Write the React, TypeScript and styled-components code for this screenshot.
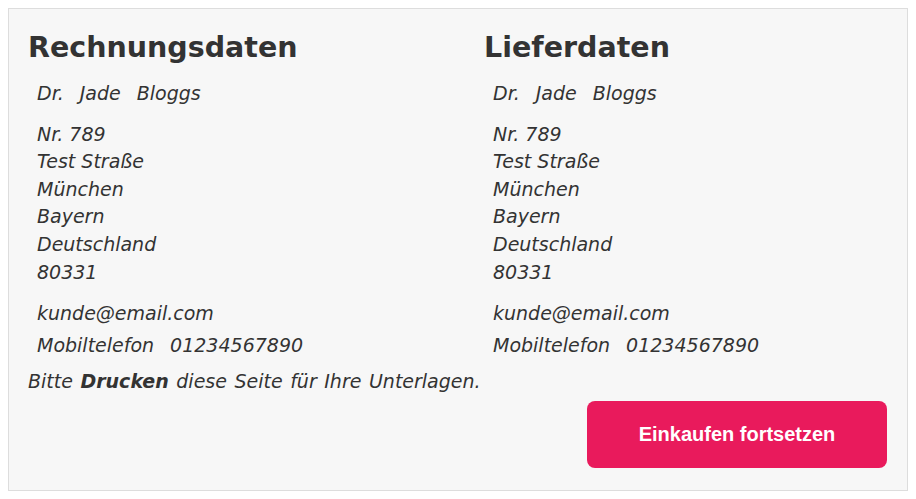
import React from 'react'
import styled, { createGlobalStyle } from 'styled-components'

const GlobalStyle = createGlobalStyle`
  body {
    margin: 8px;
    background: #ffffff;
    font-family: 'DejaVu Sans', Verdana, sans-serif;
    color: #333333;
  }
`

const Panel = styled.div`
  border: 1px solid #dddddd;
  background: #f7f7f7;
  padding: 21px 20px 20px 19px;
  height: 440px;
`

const Columns = styled.div`
  display: grid;
  grid-template-columns: 456px 1fr;
`

const Heading = styled.h2`
  margin: 0;
  font-size: 28.5px;
  line-height: 36px;
  font-weight: bold;
  color: #333333;
`

const Address = styled.address`
  font-style: italic;
  font-size: 19px;
  padding-left: 9px;
  color: #333333;
`

const Line = styled.div<{ $top?: number }>`
  line-height: 27.6px;
  margin-top: ${(p) => p.$top ?? 0}px;
  white-space: pre;
`

const Part = styled.span`
  margin-right: 16px;
`

const Note = styled.p`
  margin: 8px 0 0;
  font-size: 19px;
  line-height: 28px;
  font-style: italic;
  word-spacing: 1.5px;

  b {
    font-weight: bold;
  }
`

const Actions = styled.div`
  display: flex;
  justify-content: flex-end;
  margin-top: 6px;
`

const Button = styled.button`
  width: 300px;
  height: 67px;
  border: none;
  border-radius: 8px;
  background: #e91a5c;
  color: #ffffff;
  font-family: 'Liberation Sans', Arial, sans-serif;
  font-weight: bold;
  font-size: 20px;
  cursor: pointer;
`

type Person = {
  title: string
  first: string
  last: string
  lines: string[]
  email: string
  phone: string
}

const person: Person = {
  title: 'Dr.',
  first: 'Jade',
  last: 'Bloggs',
  lines: ['Nr. 789', 'Test Straße', 'München', 'Bayern', 'Deutschland', '80331'],
  email: 'kunde@email.com',
  phone: '01234567890'
}

function AddressBlock({ heading, p }: { heading: string; p: Person }) {
  return (
    <div>
      <Heading>{heading}</Heading>
      <Address>
        <Line $top={14}>
          <Part>{p.title}</Part>
          <Part>{p.first}</Part>
          <span>{p.last}</span>
        </Line>
        {p.lines.map((l, i) => (
          <Line key={l} $top={i === 0 ? 13 : 0}>
            {l}
          </Line>
        ))}
        <Line $top={14}>{p.email}</Line>
        <Line $top={4}>
          <Part>Mobiltelefon</Part>
          <span>{p.phone}</span>
        </Line>
      </Address>
    </div>
  )
}

export default function App() {
  return (
    <>
      <GlobalStyle />
      <Panel>
        <Columns>
          <AddressBlock heading='Rechnungsdaten' p={person} />
          <AddressBlock heading='Lieferdaten' p={person} />
        </Columns>
        <Note>
          Bitte <b>Drucken</b> diese Seite für Ihre Unterlagen.
        </Note>
        <Actions>
          <Button>Einkaufen fortsetzen</Button>
        </Actions>
      </Panel>
    </>
  )
}
